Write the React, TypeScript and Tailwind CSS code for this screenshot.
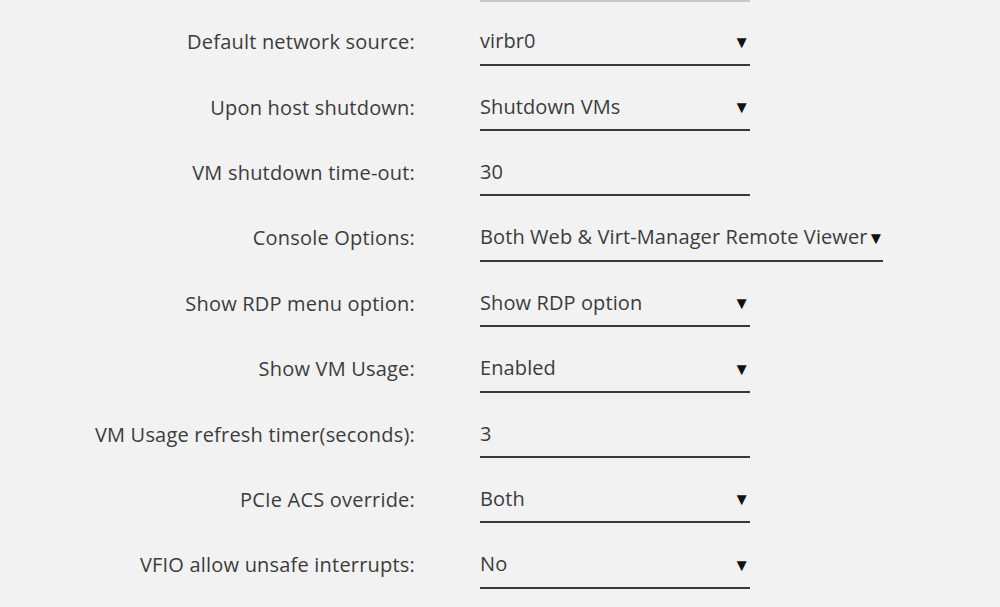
type Row = {
  label: string;
  value: string;
  select?: boolean;
  wide?: boolean;
};

const rows: Row[] = [
  { label: "Default network source:", value: "virbr0", select: true },
  { label: "Upon host shutdown:", value: "Shutdown VMs", select: true },
  { label: "VM shutdown time-out:", value: "30" },
  { label: "Console Options:", value: "Both Web & Virt-Manager Remote Viewer", select: true, wide: true },
  { label: "Show RDP menu option:", value: "Show RDP option", select: true },
  { label: "Show VM Usage:", value: "Enabled", select: true },
  { label: "VM Usage refresh timer(seconds):", value: "3" },
  { label: "PCIe ACS override:", value: "Both", select: true },
  { label: "VFIO allow unsafe interrupts:", value: "No", select: true },
];

function Field({ row }: { row: Row }) {
  return (
    <div className="flex items-center h-[65.4px]">
      <div className="w-[415px] text-right whitespace-nowrap text-[#3c3c3c] pb-[5px] tracking-[0.2px]">
        {row.label}
      </div>
      <div
        className={`ml-[65px] flex items-center justify-between border-b-2 border-[#3a3a3a] h-[42px] pb-[5px] text-[#3c3c3c] ${
          row.wide ? "w-[403px]" : "w-[270px]"
        }`}
      >
        <span className="whitespace-nowrap tracking-[0.1px]">{row.value}</span>
        {row.select && <span className="text-[17px] leading-none text-[#111]">▼</span>}
      </div>
    </div>
  );
}

export default function App() {
  return (
    <div
      className="w-[1000px] h-[607px] overflow-hidden bg-[#f2f2f2] text-[20px]"
      style={{ fontFamily: '"Open Sans", "Noto Sans", sans-serif' }}
    >
      <div className="ml-[480px] w-[270px] h-[2px] bg-[#c8c8c8]" />
      <div className="mt-[10px]">
        {rows.map((r) => (
          <Field key={r.label} row={r} />
        ))}
      </div>
    </div>
  );
}
